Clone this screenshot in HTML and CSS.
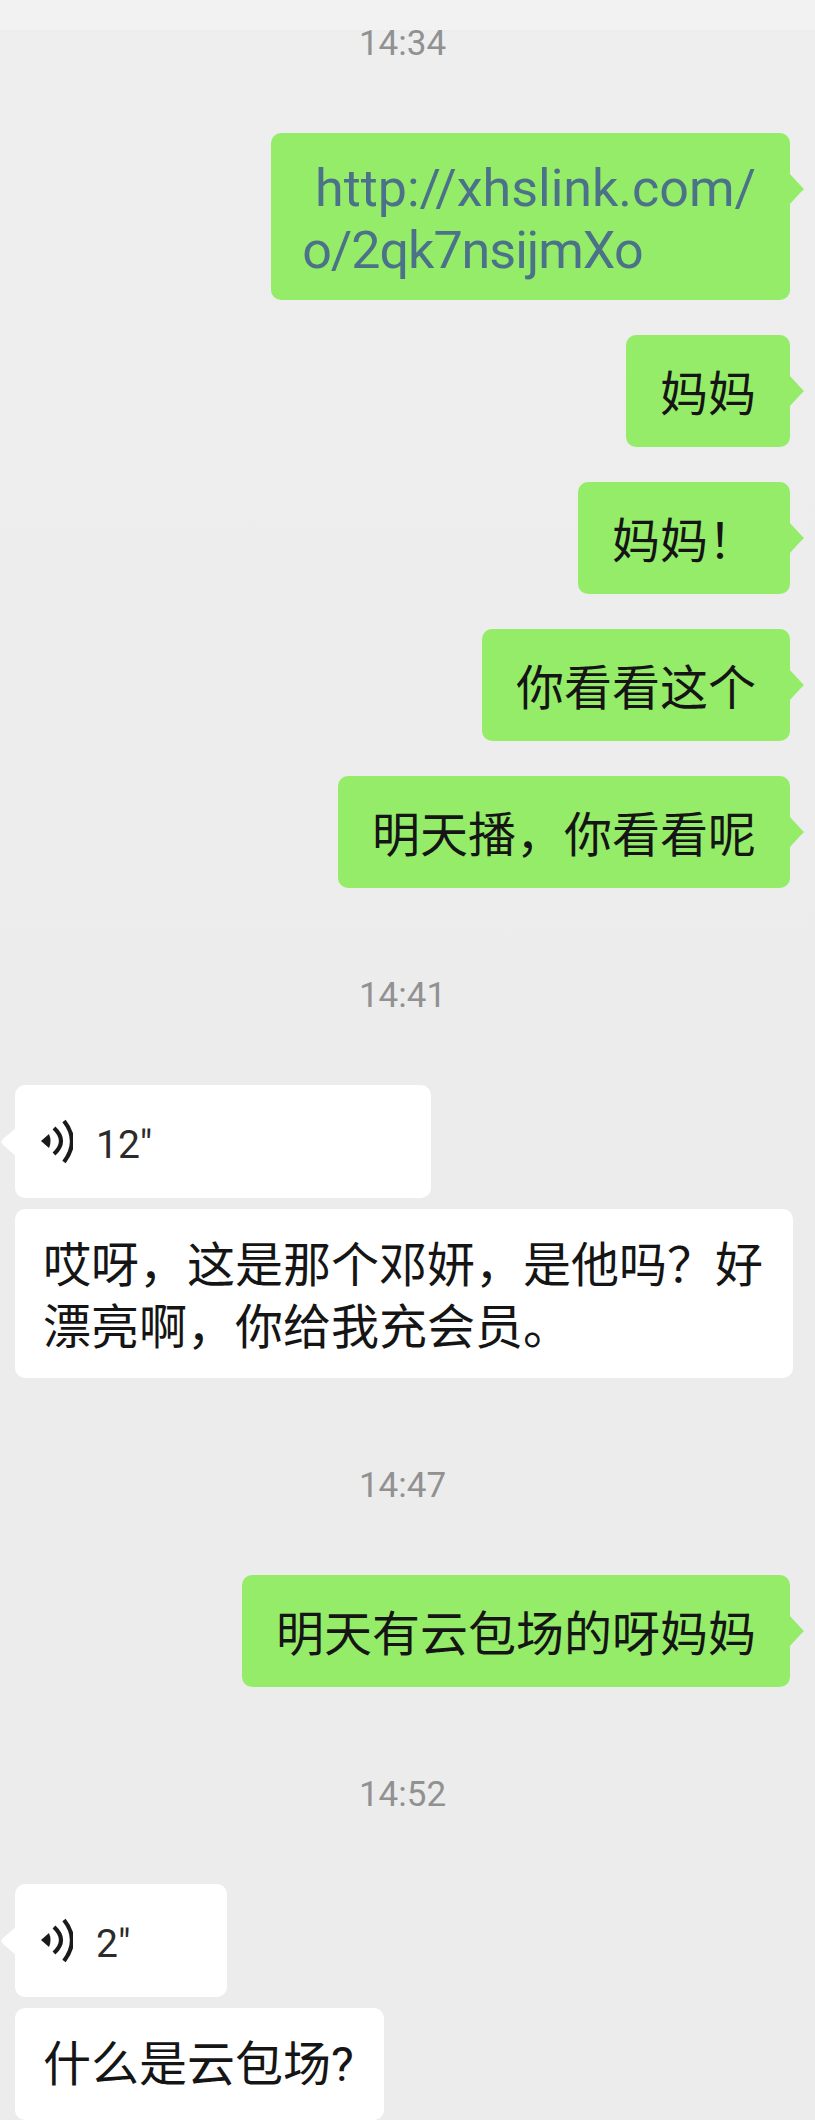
FILE: index.html
```html
<!DOCTYPE html>
<html lang="zh-CN">
<head>
<meta charset="utf-8">
<title>聊天记录</title>
<link rel="stylesheet" href="styles.css">
</head>
<body>
<main class="chat">
  <div class="time time-first">14:34</div>
  <section class="group group-first">
    <div class="bubble sent link">&nbsp;http://xhslink.com/<br><span class="link-tail">o/2qk7nsijmXo</span></div>
    <div class="bubble sent">妈妈</div>
    <div class="bubble sent">妈妈！</div>
    <div class="bubble sent">你看看这个</div>
    <div class="bubble sent">明天播，你看看呢</div>
  </section>
  <div class="time">14:41</div>
  <section class="group group-left">
    <div class="bubble received voice voice-long">
      <svg class="wave" viewBox="0 0 32 45" aria-hidden="true"><path class="dot" d="M0 22 L8 15 Q11 22 8 29 Z"/><path class="arc" d="M13 9 Q27 22 13 35"/><path class="arc" d="M23 2 Q39 22 23 43"/></svg>
      <span class="seconds">12"</span>
    </div>
    <div class="bubble plain">哎呀，这是那个邓妍，是他吗？好<br>漂亮啊，你给我充会员。</div>
  </section>
  <div class="time">14:47</div>
  <section class="group">
    <div class="bubble sent">明天有云包场的呀妈妈</div>
  </section>
  <div class="time">14:52</div>
  <section class="group group-left">
    <div class="bubble received voice voice-short">
      <svg class="wave" viewBox="0 0 32 45" aria-hidden="true"><path class="dot" d="M0 22 L8 15 Q11 22 8 29 Z"/><path class="arc" d="M13 9 Q27 22 13 35"/><path class="arc" d="M23 2 Q39 22 23 43"/></svg>
      <span class="seconds">2"</span>
    </div>
    <div class="bubble plain">什么是云包场?</div>
  </section>
</main>
</body>
</html>
```
FILE: styles.css
```css
* { box-sizing: border-box; }
html, body { margin: 0; padding: 0; }
body {
  width: 815px;
  height: 2120px;
  overflow: hidden;
  font-family: Roboto, "Noto Sans CJK SC", sans-serif;
  color: #151515;
}
.chat {
  height: 2120px;
  padding: 20px 25px 0 15px;
  background: linear-gradient(#f2f2f2 0, #f2f2f2 30px, #e9e9e9 31px, #eeeeee 32px, #ececec 1100px);
}
.time {
  height: 46px;
  margin-top: 84px;
  font-size: 35px;
  line-height: 48px;
  text-align: center;
  color: #919191;
}
.time-first { margin-top: 0; }
.group {
  display: flex;
  flex-direction: column;
  align-items: flex-end;
  gap: 35px;
  margin-top: 67px;
}
.group-left {
  align-items: flex-start;
  gap: 11px;
}
.bubble {
  position: relative;
  min-height: 112px;
  padding: 29px 34px 21px;
  font-size: 48px;
  line-height: 62px;
  border-radius: 10px;
  white-space: nowrap;
}
.sent { background: #95ec69; }
.sent::after {
  content: "";
  position: absolute;
  top: 40px;
  right: -14px;
  width: 15px;
  height: 32px;
  background: #95ec69;
  clip-path: polygon(0 0, 12px 13px, 15px 16px, 12px 19px, 0 32px);
}
.link {
  padding: 25px 34px 18px 31px;
  font-size: 52px;
  color: #4b7288;
}
.link-tail { letter-spacing: -1px; }
.received, .plain {
  background: #fff;
  margin-right: -3px;
}
.plain { padding: 26px 30px 19px 28px; }
.received::before {
  content: "";
  position: absolute;
  top: 43px;
  left: -14px;
  width: 15px;
  height: 28px;
  background: #fff;
  clip-path: polygon(15px 0, 2px 11px, 0 14px, 2px 17px, 15px 28px);
}
.voice {
  display: flex;
  align-items: center;
  gap: 23px;
  min-height: 113px;
  padding: 0 0 0 26px;
  font-size: 39px;
  color: #2b2b2b;
}
.voice-long { width: 416px; }
.voice-short { width: 212px; }
.seconds { margin-top: 6px; }
.wave {
  width: 32px;
  height: 45px;
  flex: none;
}
.dot { fill: #1a1a1a; }
.arc {
  fill: none;
  stroke: #1a1a1a;
  stroke-width: 4.2;
}
```
